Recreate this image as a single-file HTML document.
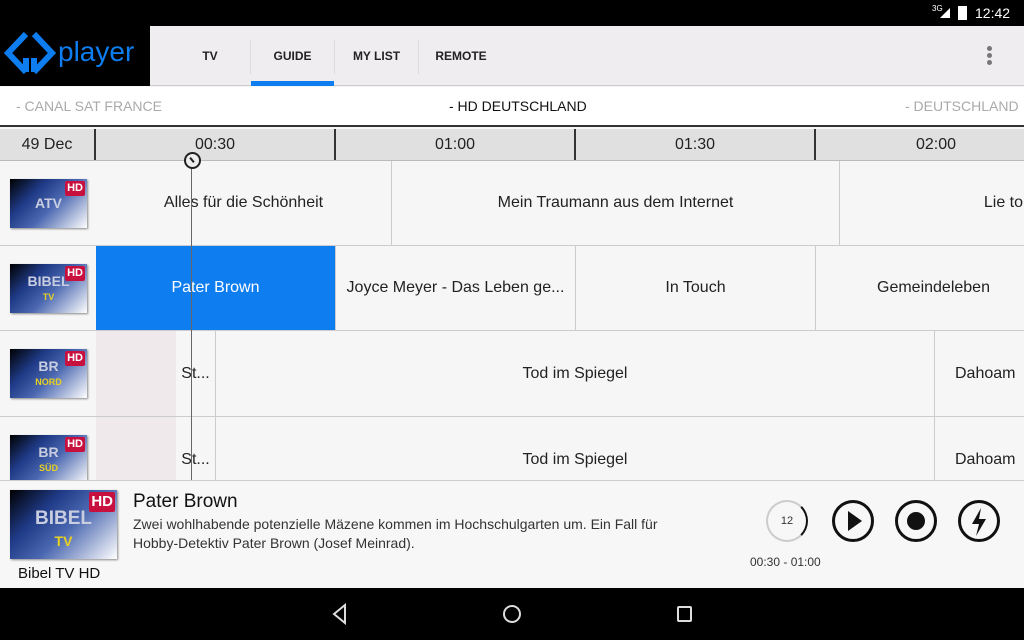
<!DOCTYPE html><html><head><meta charset="utf-8"><style>
*{margin:0;padding:0;box-sizing:border-box}
body{width:1024px;height:640px;overflow:hidden;background:#f5f5f5;font-family:"Liberation Sans",sans-serif;position:relative}
.a{position:absolute}
.cell{position:absolute;top:0;border-right:1px solid #ccc;display:flex;align-items:center;justify-content:center;font-size:16px;color:#222;white-space:nowrap;overflow:hidden}
.row{position:absolute;left:0;width:1024px;height:85px;border-bottom:1px solid #ccc;background:#f6f6f6}
.logo{position:absolute;left:10px;width:77px;height:49px;background:linear-gradient(135deg,#000 0%,#1f3a86 30%,#4a67b0 55%,#fff 100%);box-shadow:1px 1px 2px #888;color:#c8cde0;font-weight:bold;font-size:14px;text-align:center}
.hd{position:absolute;right:2px;top:2px;background:#c8103e;color:#fff;font-size:11px;font-weight:bold;padding:1px 2px;border-radius:2px;line-height:13px}
.tab{position:absolute;top:26px;height:60px;display:flex;align-items:center;justify-content:center;font-size:12px;font-weight:bold;color:#222}
.sep{position:absolute;top:40px;width:1px;height:34px;background:#ddd}
.btn{position:absolute;top:500px;width:42px;height:42px;border:3px solid #111;border-radius:50%}
</style></head><body>
<div class="a" style="left:0;top:0;width:1024px;height:26px;background:#000;color:#fff;font-size:14px"><span class="a" style="left:975px;top:5px">12:42</span><span class="a" style="left:932px;top:4px;font-size:8px">3G</span><div class="a" style="left:940px;top:8px;width:0;height:0;border-left:10px solid transparent;border-bottom:10px solid #fff"></div><div class="a" style="left:958px;top:6px;width:9px;height:14px;background:#fff"></div></div>
<div class="a" style="left:0;top:26px;width:150px;height:60px;background:#000"></div>
<svg class="a" style="left:4px;top:30px" width="52" height="50" viewBox="0 0 52 50"><path d="M22 4 L4 23 L22 42 M30 4 L48 23 L30 42 M22 42 V28 M30 42 V28" stroke="#0d7df0" stroke-width="6" fill="none"/></svg>
<div class="a" style="left:58px;top:36px;font-size:28px;color:#0d7df0">player</div>
<div class="a" style="left:150px;top:26px;width:874px;height:60px;background:#efedf0;border-bottom:1px solid #ccc"></div>
<div class="tab" style="left:170px;width:80px">TV</div><div class="sep" style="left:250px"></div>
<div class="tab" style="left:251px;width:83px">GUIDE</div><div class="a" style="left:251px;top:81px;width:83px;height:5px;background:#0d7df0"></div><div class="sep" style="left:334px"></div>
<div class="tab" style="left:335px;width:83px">MY LIST</div><div class="sep" style="left:418px"></div>
<div class="tab" style="left:419px;width:84px">REMOTE</div>
<div class="a" style="left:987px;top:46px;width:5px;height:5px;background:#777;border-radius:50%;box-shadow:0 7px 0 #777,0 14px 0 #777"></div>
<div class="a" style="left:0;top:87px;width:1024px;height:40px;background:#fff;border-bottom:2px solid #333;font-size:14px"><span class="a" style="left:16px;top:11px;color:#aaa">- CANAL SAT FRANCE</span><span class="a" style="left:449px;top:11px;color:#111">- HD DEUTSCHLAND</span><span class="a" style="left:905px;top:11px;color:#aaa">- DEUTSCHLAND</span></div>
<div class="a" style="left:0;top:129px;width:1024px;height:32px;background:#e0e0e0;border-bottom:1px solid #bbb;font-size:16px;color:#222">
<div class="a" style="left:0;width:96px;height:31px;border-right:2px solid #333;text-align:center;line-height:31px">49 Dec</div>
<div class="a" style="left:96px;width:240px;height:31px;border-right:2px solid #333;text-align:center;line-height:31px">00:30</div>
<div class="a" style="left:336px;width:240px;height:31px;border-right:2px solid #333;text-align:center;line-height:31px">01:00</div>
<div class="a" style="left:576px;width:240px;height:31px;border-right:2px solid #333;text-align:center;line-height:31px">01:30</div>
<div class="a" style="left:816px;width:240px;height:31px;text-align:center;line-height:31px">02:00</div></div>
<div class="row" style="top:161px"><div class="logo" style="top:18px;line-height:49px">ATV<span class="hd">HD</span></div>
<div class="cell" style="left:96px;width:296px;height:84px">Alles für die Schönheit</div><div class="cell" style="left:392px;width:448px;height:84px">Mein Traumann aus dem Internet</div><div class="cell" style="left:840px;width:200px;height:84px;justify-content:flex-end;padding-right:16px">Lie to</div></div>
<div class="row" style="top:246px"><div class="logo" style="top:18px;padding-top:10px;line-height:14px">BIBEL<br><span style="color:#e8d020;font-size:9px">TV</span><span class="hd">HD</span></div>
<div class="cell" style="left:96px;width:240px;height:84px;background:#0d7df0;color:#fff">Pater Brown</div><div class="cell" style="left:336px;width:240px;height:84px">Joyce Meyer - Das Leben ge...</div><div class="cell" style="left:576px;width:240px;height:84px">In Touch</div><div class="cell" style="left:816px;width:240px;height:84px;justify-content:flex-start;padding-left:61px">Gemeindeleben</div></div>
<div class="row" style="top:331px;height:86px"><div class="logo" style="top:18px;padding-top:10px;line-height:14px">BR<br><span style="color:#e8d020;font-size:9px">NORD</span><span class="hd">HD</span></div>
<div class="cell" style="left:96px;width:80px;height:85px;background:#efe9ec;border:0"></div><div class="cell" style="left:176px;width:40px;height:85px">St...</div><div class="cell" style="left:216px;width:719px;height:85px">Tod im Spiegel</div><div class="cell" style="left:935px;width:100px;height:85px;justify-content:flex-start;padding-left:20px">Dahoam</div></div>
<div class="row" style="top:417px"><div class="logo" style="top:18px;padding-top:10px;line-height:14px">BR<br><span style="color:#e8d020;font-size:9px">SÜD</span><span class="hd">HD</span></div>
<div class="cell" style="left:96px;width:80px;height:85px;background:#efe9ec;border:0"></div><div class="cell" style="left:176px;width:40px;height:85px">St...</div><div class="cell" style="left:216px;width:719px;height:85px">Tod im Spiegel</div><div class="cell" style="left:935px;width:100px;height:85px;justify-content:flex-start;padding-left:20px">Dahoam</div></div>
<div class="a" style="left:191px;top:160px;width:1px;height:320px;background:#666"></div>
<div class="a" style="left:184px;top:152px;width:17px;height:17px;border:2px solid #222;border-radius:50%;background:#eee"><div class="a" style="left:5px;top:3px;width:2px;height:6px;background:#222;transform:rotate(-40deg)"></div></div>
<div class="a" style="left:0;top:480px;width:1024px;height:108px;background:#f7f7f7;border-top:1px solid #ccc"></div>
<div class="logo" style="top:490px;width:107px;height:69px;font-size:19px;padding-top:18px;line-height:22px">BIBEL<br><span style="color:#e8d020;font-size:14px">TV</span><span class="hd" style="font-size:15px;line-height:18px">HD</span></div>
<div class="a" style="left:18px;top:565px;font-size:15px;color:#111">Bibel TV HD</div>
<div class="a" style="left:133px;top:491px;font-size:19px;color:#111">Pater Brown</div>
<div class="a" style="left:133px;top:515px;font-size:14px;color:#333;line-height:19px;width:570px">Zwei wohlhabende potenzielle Mäzene kommen im Hochschulgarten um. Ein Fall für Hobby-Detektiv Pater Brown (Josef Meinrad).</div>
<div class="a" style="left:766px;top:500px;width:42px;height:42px;border:2px solid #ccc;border-right-color:#111;border-radius:50%;text-align:center;line-height:38px;font-size:11px;color:#333">12</div>
<div class="a" style="left:750px;top:555px;font-size:12px;color:#333">00:30 - 01:00</div>
<div class="btn" style="left:832px"><div class="a" style="left:13px;top:8px;border-left:14px solid #111;border-top:10px solid transparent;border-bottom:10px solid transparent"></div></div>
<div class="btn" style="left:895px"><div class="a" style="left:9px;top:9px;width:18px;height:18px;background:#111;border-radius:50%"></div></div>
<div class="btn" style="left:958px"><svg class="a" style="left:8px;top:5px" width="20" height="28" viewBox="0 0 20 28"><path d="M12 0 L3 16 H10 L7 28 L17 11 H10 Z" fill="#111"/></svg></div>
<div class="a" style="left:0;top:588px;width:1024px;height:52px;background:#000"></div>
<svg class="a" style="left:330px;top:603px" width="20" height="22"><path d="M15 2 L4 11 L15 20 Z" stroke="#ddd" stroke-width="2" fill="none"/></svg>
<div class="a" style="left:503px;top:605px;width:18px;height:18px;border:2px solid #ddd;border-radius:50%"></div>
<div class="a" style="left:677px;top:606px;width:15px;height:16px;border:2px solid #ddd;border-radius:2px"></div>
</body></html>
